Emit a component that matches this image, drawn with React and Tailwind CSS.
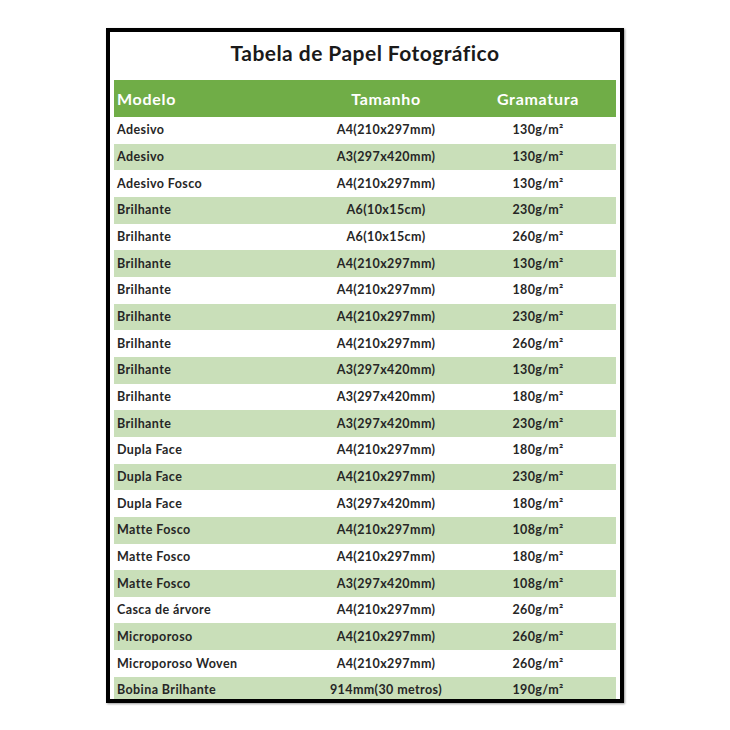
const rows = [
  ['Adesivo', 'A4(210x297mm)', '130g/m²'],
  ['Adesivo', 'A3(297x420mm)', '130g/m²'],
  ['Adesivo Fosco', 'A4(210x297mm)', '130g/m²'],
  ['Brilhante', 'A6(10x15cm)', '230g/m²'],
  ['Brilhante', 'A6(10x15cm)', '260g/m²'],
  ['Brilhante', 'A4(210x297mm)', '130g/m²'],
  ['Brilhante', 'A4(210x297mm)', '180g/m²'],
  ['Brilhante', 'A4(210x297mm)', '230g/m²'],
  ['Brilhante', 'A4(210x297mm)', '260g/m²'],
  ['Brilhante', 'A3(297x420mm)', '130g/m²'],
  ['Brilhante', 'A3(297x420mm)', '180g/m²'],
  ['Brilhante', 'A3(297x420mm)', '230g/m²'],
  ['Dupla Face', 'A4(210x297mm)', '180g/m²'],
  ['Dupla Face', 'A4(210x297mm)', '230g/m²'],
  ['Dupla Face', 'A3(297x420mm)', '180g/m²'],
  ['Matte Fosco', 'A4(210x297mm)', '108g/m²'],
  ['Matte Fosco', 'A4(210x297mm)', '180g/m²'],
  ['Matte Fosco', 'A3(297x420mm)', '108g/m²'],
  ['Casca de árvore', 'A4(210x297mm)', '260g/m²'],
  ['Microporoso', 'A4(210x297mm)', '260g/m²'],
  ['Microporoso Woven', 'A4(210x297mm)', '260g/m²'],
  ['Bobina Brilhante', '914mm(30 metros)', '190g/m²'],
]

export default function App() {
  return (
    <div className="min-h-[730px] bg-white pt-[28px] font-['Lato','Liberation_Sans',sans-serif]">
      <div className="mx-auto h-[675px] w-[518px] overflow-hidden border-4 border-black bg-white shadow-[1px_1px_2px_rgba(0,0,0,0.4)]">
        <h1 className="flex h-[48px] items-center justify-center pb-[7px] text-[21px] font-bold tracking-[0.45px] text-[#1a1a1a]">
          Tabela de Papel Fotográfico
        </h1>
        <div className="mx-[4px]">
          {/* header */}
          <div className="grid h-[37px] grid-cols-[196px_152px_152px] items-center bg-[#70ad47] text-[16px] font-bold tracking-[0.7px] text-white">
            <div className="pl-[3px]">Modelo</div>
            <div className="text-center">Tamanho</div>
            <div className="text-center">Gramatura</div>
          </div>
          {rows.map((r, i) => (
            <div
              key={i}
              className={`grid h-[26.67px] grid-cols-[196px_152px_152px] items-center pt-[1px] text-[12.5px] font-bold tracking-[0.4px] text-[#262626] ${i % 2 === 1 ? 'bg-[#c9dfb9]' : 'bg-white'}`}
            >
              <div className="pl-[3px]">{r[0]}</div>
              <div className="text-center">{r[1]}</div>
              <div className="text-center">{r[2]}</div>
            </div>
          ))}
        </div>
      </div>
    </div>
  )
}
